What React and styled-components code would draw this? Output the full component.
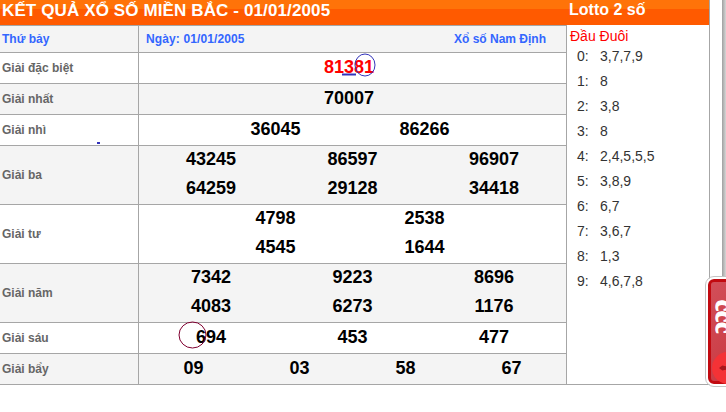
import React from "react";
import styled, { createGlobalStyle } from "styled-components";

const Global = createGlobalStyle`
  html, body { margin: 0; padding: 0; background: #fff; overflow: hidden; }
  body { font-family: "Liberation Sans", Arial, sans-serif; width: 726px; height: 412px; }
`;

const Page = styled.div`
  position: relative;
  width: 726px;
  height: 412px;
  overflow: hidden;
  display: flex;
  align-items: flex-start;
`;
const Results = styled.div`
  width: 567px;
  flex: none;
`;
const Banner = styled.div`
  height: 25px;
  background: linear-gradient(#ff7309 0, #ff7309 9px, #ff5a00 9px, #ff5a00 100%);
  color: #fff;
  font-size: 17px;
  font-weight: bold;
  letter-spacing: 0.12px;
  line-height: 22px;
  padding-left: 2px;
  white-space: nowrap;
`;
const Row = styled.div`
  display: grid;
  grid-template-columns: 139px 1fr;
  height: ${(p) => p.$h}px;
  border-top: 1px solid #a6a6a6;
  border-right: ${(p) => (p.$h ? "1px solid #a6a6a6" : "0")};
  background: ${(p) => (p.$alt ? "#f4f4f4" : "#fff")};
`;
const Label = styled.div`
  display: flex;
  align-items: center;
  padding-left: 2px;
  font-size: 12px;
  font-weight: bold;
  color: #666;
  border-right: 1px solid #a6a6a6;
`;
const DayLabel = styled(Label)`
  color: #3366ff;
`;
const Info = styled.div`
  display: flex;
  justify-content: space-between;
  align-items: center;
  padding: 0 20px 0 7px;
  font-size: 12px;
  font-weight: bold;
  color: #3366ff;
`;
const DateText = styled.span`
  letter-spacing: 0.12px;
`;
const Numbers = styled.div`
  display: grid;
  grid-template-columns: repeat(${(p) => p.$cols}, ${(p) => p.$w}px);
  grid-auto-rows: 29px;
  justify-content: center;
  align-content: center;
  padding-right: ${(p) => p.$pr || 0}px;
`;
const Num = styled.div`
  text-align: center;
  font-size: 18px;
  font-weight: bold;
  line-height: 27px;
  color: ${(p) => (p.$red ? "#ff0000" : "#000")};
`;
const Side = styled.div`
  width: 143px;
  height: 385px;
  flex: none;
  box-sizing: border-box;
  border-right: 1px solid #a6a6a6;
  border-bottom: 1px solid #a6a6a6;
`;
const SideTitle = styled.div`
  height: 25px;
  background: linear-gradient(#ff7309 0, #ff7309 9px, #ff5a00 9px, #ff5a00 100%);
  color: #fff;
  font-size: 16px;
  font-weight: bold;
  line-height: 19px;
  padding-left: 2px;
`;
const SideHead = styled.div`
  color: #ff0000;
  font-size: 14px;
  line-height: 20px;
  padding-left: 3px;
  margin-top: 1px;
`;
const Lotto = styled.div`
  display: grid;
  grid-template-columns: 23px 1fr;
  grid-auto-rows: 25px;
  padding-left: 10px;
  font-size: 14px;
  line-height: 20px;
  color: #333;
`;
const FarLine = styled.div`
  position: absolute;
  left: 722px;
  top: 0;
  width: 4px;
  height: 278px;
  background: linear-gradient(90deg, #a0a0a0, #d6d6d6);
`;
const Widget = styled.div`
  position: absolute;
  left: 706px;
  top: 277px;
  width: 40px;
  height: 109px;
  box-sizing: border-box;
  border: 2px solid #fff;
  outline: 1px solid #c4c4c4;
  border-radius: 8px;
  background: linear-gradient(135deg, #d2505a, #c9363e);
  box-shadow: inset 0 0 0 3px #c20a10;
  overflow: hidden;
`;
const WidgetText = styled.span`
  position: absolute;
  left: 7px;
  top: 21px;
  writing-mode: vertical-rl;
  font-family: "Liberation Serif", serif;
  font-size: 25px;
  font-weight: bold;
  line-height: 18px;
  color: #fff;
  -webkit-text-stroke: 1.2px #fff;
`;
const WidgetBadge = styled.span`
  position: absolute;
  left: 4px;
  top: 73px;
  width: 32px;
  height: 32px;
  border-radius: 50%;
  background: #f43236;
`;
const WidgetIcon = styled.svg`
  position: absolute;
  left: 11px;
  top: 84px;
`;
const Mark = styled.svg`
  position: absolute;
  left: ${(p) => p.$x}px;
  top: ${(p) => p.$y}px;
  overflow: visible;
`;

const rows = [
  { label: "Giải nhất", h: 30, alt: true, cols: 1, w: 100, pr: 7, nums: ["70007"] },
  { label: "Giải nhì", h: 30, cols: 2, w: 149, pr: 5, nums: ["36045", "86266"] },
  { label: "Giải ba", h: 58, alt: true, cols: 3, w: 141.5, nums: ["43245", "86597", "96907", "64259", "29128", "34418"] },
  { label: "Giải tư", h: 58, cols: 2, w: 149, pr: 5, nums: ["4798", "2538", "4545", "1644"] },
  { label: "Giải năm", h: 58, alt: true, cols: 3, w: 141.5, nums: ["7342", "9223", "8696", "4083", "6273", "1176"] },
  { label: "Giải sáu", h: 30, cols: 3, w: 141.5, nums: ["694", "453", "477"] },
  { label: "Giải bẩy", h: 30, alt: true, cols: 4, w: 106, nums: ["09", "03", "58", "67"] },
];
const lotto = [
  ["0:", "3,7,7,9"], ["1:", "8"], ["2:", "3,8"], ["3:", "8"], ["4:", "2,4,5,5,5"],
  ["5:", "3,8,9"], ["6:", "6,7"], ["7:", "3,6,7"], ["8:", "1,3"], ["9:", "4,6,7,8"],
];

export default function App() {
  return (
    <Page>
      <Global />
      <Results>
        <Banner>KẾT QUẢ XỔ SỐ MIỀN BẮC - 01/01/2005</Banner>
        <Row $h={26} $alt>
          <DayLabel>Thứ bảy</DayLabel>
          <Info><DateText>Ngày: 01/01/2005</DateText><span>Xổ số Nam Định</span></Info>
        </Row>
        <Row $h={30}>
          <Label>Giải đặc biệt</Label>
          <Numbers $cols={1} $w={100} $pr={7}><Num $red>81381</Num></Numbers>
        </Row>
        {rows.map((r) => (
          <Row key={r.label} $h={r.h} $alt={r.alt}>
            <Label>{r.label}</Label>
            <Numbers $cols={r.cols} $w={r.w} $pr={r.pr}>
              {r.nums.map((n) => <Num key={n}>{n}</Num>)}
            </Numbers>
          </Row>
        ))}
        <Row $h={0} />
      </Results>
      <Side>
        <SideTitle>Lotto 2 số</SideTitle>
        <SideHead>Đầu Đuôi</SideHead>
        <Lotto>
          {lotto.map(([a, b]) => (
            <React.Fragment key={a}><span>{a}</span><span>{b}</span></React.Fragment>
          ))}
        </Lotto>
      </Side>
      <FarLine />
      <Widget>
        <WidgetText>ccc</WidgetText>
        <WidgetBadge />
        <WidgetIcon width="10" height="10" viewBox="0 0 12 12">
          <path d="M0 6 L4 3 L8 4 L11 1 L10 6 L11 11 L8 8 L4 9 Z" fill="#a8161c" />
        </WidgetIcon>
      </Widget>
      <Mark $x={353} $y={53} width="24" height="24"><ellipse cx="12" cy="12" rx="10" ry="11" fill="none" stroke="#3333bb" strokeWidth="1" /></Mark>
      <Mark $x={341} $y={73} width="16" height="4"><path d="M1 1.5 L15 1.5" stroke="#3333bb" strokeWidth="2" /></Mark>
      <Mark $x={178} $y={321} width="30" height="30"><ellipse cx="14.5" cy="14" rx="13.5" ry="13" fill="none" stroke="#800030" strokeWidth="1" /></Mark>
      <Mark $x={97} $y={141} width="6" height="5"><path d="M0 2 L3 2" stroke="#3333bb" strokeWidth="2" /></Mark>
    </Page>
  );
}
